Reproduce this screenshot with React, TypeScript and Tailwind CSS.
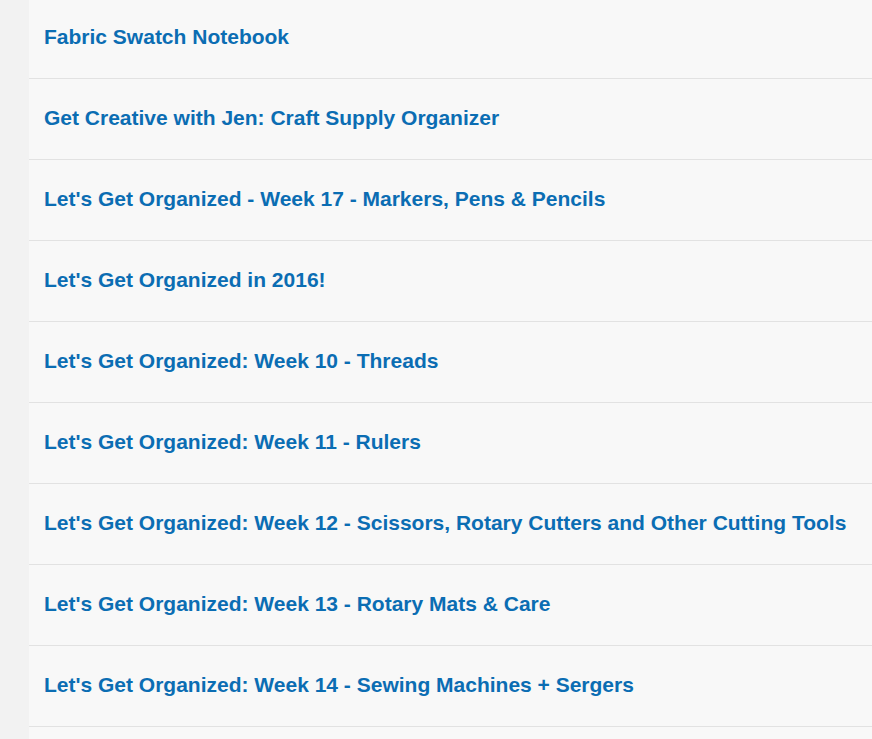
import React from "react";

const posts = [
  "Fabric Swatch Notebook",
  "Get Creative with Jen: Craft Supply Organizer",
  "Let's Get Organized - Week 17 - Markers, Pens & Pencils",
  "Let's Get Organized in 2016!",
  "Let's Get Organized: Week 10 - Threads",
  "Let's Get Organized: Week 11 - Rulers",
  "Let's Get Organized: Week 12 - Scissors, Rotary Cutters and Other Cutting Tools",
  "Let's Get Organized: Week 13 - Rotary Mats & Care",
  "Let's Get Organized: Week 14 - Sewing Machines + Sergers",
];

const App = () => {
  return (
    <div
      className="flex h-[739px] overflow-hidden bg-[#f2f2f2]"
      style={{ fontFamily: "'Liberation Sans', Arial, sans-serif" }}
    >
      <div className="w-[29px] shrink-0" />
      <ul className="flex-1 bg-[#f8f8f8] -mt-[2px]">
        {posts.map((title) => (
          <li
            key={title}
            className="h-[81px] flex items-center border-b border-[#e2e2e2] pl-[15px] pb-[2px]"
          >
            <a href="#" className="text-[21px] font-bold text-[#0b6db3] whitespace-nowrap">
              {title}
            </a>
          </li>
        ))}
      </ul>
    </div>
  );
};

export default App;
